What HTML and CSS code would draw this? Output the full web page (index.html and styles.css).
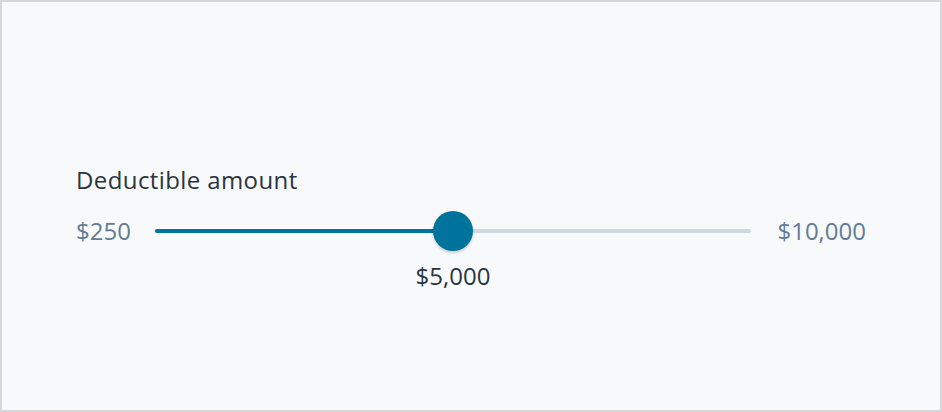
FILE: index.html
```html
<!DOCTYPE html>
<html>
<head>
<meta charset="utf-8">
<link rel="stylesheet" href="styles.css">
</head>
<body>
<div class="frame">
  <div class="field">
    <div class="label">Deductible amount</div>
    <div class="row">
      <span class="bound min">$250</span>
      <div class="track">
        <div class="fill" style="width: 50%"></div>
        <div class="thumb" style="left: 50%"></div>
        <div class="value" style="left: 50%">$5,000</div>
      </div>
      <span class="bound max">$10,000</span>
    </div>
  </div>
</div>
</body>
</html>
```
FILE: styles.css
```css
html, body {
  margin: 0;
  padding: 0;
}
body {
  font-family: "Open Sans", "Noto Sans", sans-serif;
}
.frame {
  box-sizing: border-box;
  width: 942px;
  height: 412px;
  border: 2px solid #d7d7d7;
  background: #f7f9fb;
  padding: 162px 74px 0;
}
.label {
  font-size: 24px;
  letter-spacing: 0.4px;
  color: #2b3440;
  line-height: 32px;
  margin-bottom: 15px;
}
.row {
  display: flex;
  align-items: center;
  height: 40px;
}
.bound {
  font-size: 24px;
  color: #637c95;
  line-height: 32px;
  white-space: nowrap;
}
.min {
  width: 54px;
}
.max {
  width: 89px;
  text-align: right;
}
.track {
  position: relative;
  flex: 1;
  height: 4px;
  margin: 0 26px 0 25px;
  background: #d0d9e2;
  border-radius: 2px;
}
.fill {
  height: 100%;
  background: #00739d;
  border-radius: 2px;
}
.thumb {
  position: absolute;
  top: 50%;
  width: 40px;
  height: 40px;
  margin: -20px 0 0 -20px;
  border-radius: 50%;
  background: #00739d;
  box-shadow: 0 2px 3px rgba(0, 0, 0, 0.18);
}
.value {
  position: absolute;
  top: 31px;
  transform: translateX(-50%);
  font-size: 24px;
  line-height: 32px;
  color: #2b3440;
  white-space: nowrap;
}
```
